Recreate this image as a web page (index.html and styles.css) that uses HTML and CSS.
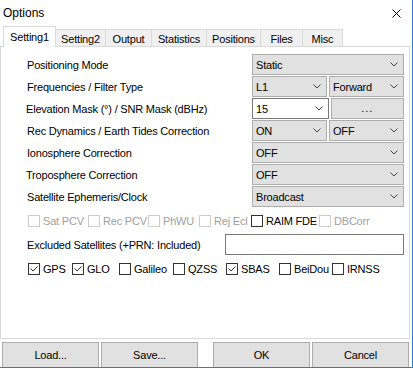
FILE: index.html
```html
<!DOCTYPE html>
<html>
<head>
<meta charset="utf-8">
<link rel="stylesheet" href="styles.css">
</head>
<body>
<div class="window">
  <div class="titlebar">
    <span class="title">Options</span>
    <svg class="close" width="9" height="9" viewBox="0 0 9 9"><path d="M0.5 0.5 L8.5 8.5 M8.5 0.5 L0.5 8.5" stroke="#000" stroke-width="1" fill="none"/></svg>
  </div>
  <div class="tabs">
    <div class="tab active w53">Setting1</div>
    <div class="tab w50">Setting2</div>
    <div class="tab w46">Output</div>
    <div class="tab w55">Statistics</div>
    <div class="tab w54">Positions</div>
    <div class="tab w42">Files</div>
    <div class="tab w40">Misc</div>
  </div>
  <div class="panel">
    <div class="rows">
      <div class="row"><span class="label">Positioning Mode</span>
        <div class="ctl"><div class="combo">Static<svg class="chev" width="8" height="5" viewBox="0 0 8 5"><path d="M0.5 0.5 L4 4 L7.5 0.5" stroke="#444" fill="none"/></svg></div></div></div>
      <div class="row"><span class="label">Frequencies / Filter Type</span>
        <div class="ctl"><div class="combo">L1<svg class="chev" width="8" height="5" viewBox="0 0 8 5"><path d="M0.5 0.5 L4 4 L7.5 0.5" stroke="#444" fill="none"/></svg></div><div class="combo">Forward<svg class="chev" width="8" height="5" viewBox="0 0 8 5"><path d="M0.5 0.5 L4 4 L7.5 0.5" stroke="#444" fill="none"/></svg></div></div></div>
      <div class="row"><span class="label shift">Elevation Mask (°) / SNR Mask (dBHz)</span>
        <div class="ctl"><div class="combo edit">15<svg class="chev" width="8" height="5" viewBox="0 0 8 5"><path d="M0.5 0.5 L4 4 L7.5 0.5" stroke="#444" fill="none"/></svg></div><div class="button dots">...</div></div></div>
      <div class="row"><span class="label">Rec Dynamics / Earth Tides Correction</span>
        <div class="ctl"><div class="combo">ON<svg class="chev" width="8" height="5" viewBox="0 0 8 5"><path d="M0.5 0.5 L4 4 L7.5 0.5" stroke="#444" fill="none"/></svg></div><div class="combo">OFF<svg class="chev" width="8" height="5" viewBox="0 0 8 5"><path d="M0.5 0.5 L4 4 L7.5 0.5" stroke="#444" fill="none"/></svg></div></div></div>
      <div class="row"><span class="label">Ionosphere Correction</span>
        <div class="ctl"><div class="combo">OFF<svg class="chev" width="8" height="5" viewBox="0 0 8 5"><path d="M0.5 0.5 L4 4 L7.5 0.5" stroke="#444" fill="none"/></svg></div></div></div>
      <div class="row"><span class="label shift">Troposphere Correction</span>
        <div class="ctl"><div class="combo">OFF<svg class="chev" width="8" height="5" viewBox="0 0 8 5"><path d="M0.5 0.5 L4 4 L7.5 0.5" stroke="#444" fill="none"/></svg></div></div></div>
      <div class="row"><span class="label">Satellite Ephemeris/Clock</span>
        <div class="ctl"><div class="combo">Broadcast<svg class="chev" width="8" height="5" viewBox="0 0 8 5"><path d="M0.5 0.5 L4 4 L7.5 0.5" stroke="#444" fill="none"/></svg></div></div></div>
    </div>

    <div class="checks first">
      <div class="chk disabled w60"><span class="box"></span>Sat PCV</div>
      <div class="chk disabled w60"><span class="box"></span>Rec PCV</div>
      <div class="chk disabled w51"><span class="box"></span>PhWU</div>
      <div class="chk disabled w52"><span class="box"></span>Rej Ecl</div>
      <div class="chk w68"><span class="box"></span>RAIM FDE</div>
      <div class="chk disabled"><span class="box"></span>DBCorr</div>
    </div>

    <div class="row excl"><span class="label">Excluded Satellites (+PRN: Included)</span><div class="input"></div></div>

    <div class="checks second">
      <div class="chk w44"><span class="box"><svg width="10" height="10" viewBox="0 0 10 10"><path d="M1.5 4.5 L4 7 L8.5 2.5" stroke="#333" fill="none"/></svg></span>GPS</div>
      <div class="chk w47"><span class="box"><svg width="10" height="10" viewBox="0 0 10 10"><path d="M1.5 4.5 L4 7 L8.5 2.5" stroke="#333" fill="none"/></svg></span>GLO</div>
      <div class="chk w54"><span class="box"></span>Galileo</div>
      <div class="chk w53"><span class="box"></span>QZSS</div>
      <div class="chk w53"><span class="box"><svg width="10" height="10" viewBox="0 0 10 10"><path d="M1.5 4.5 L4 7 L8.5 2.5" stroke="#333" fill="none"/></svg></span>SBAS</div>
      <div class="chk w53"><span class="box"></span>BeiDou</div>
      <div class="chk"><span class="box"></span>IRNSS</div>
    </div>
  </div>
  <div class="buttons">
    <div class="button btn">Load...</div>
    <div class="button btn">Save...</div>
    <div class="button btn ok">OK</div>
    <div class="button btn">Cancel</div>
  </div>
</div>
</body>
</html>
```

FILE: styles.css
```css
html, body {
  margin: 0;
  padding: 0;
  background: #fff;
}
body {
  width: 413px;
  height: 368px;
  overflow: hidden;
  font-family: "Liberation Sans", Arial, sans-serif;
  font-size: 11px;
  letter-spacing: -0.2px;
  color: #000;
}
.window {
  width: 412px;
  height: 367px;
  border-right: 1px solid #2a7fd4;
  border-bottom: 1px solid #2a7fd4;
  overflow: hidden;
  display: flex;
  flex-direction: column;
}
.titlebar {
  height: 26px;
  flex: none;
  display: flex;
  align-items: center;
  padding-left: 3px;
}
.title {
  font-size: 12px;
  letter-spacing: 0;
}
.close {
  margin-left: auto;
  margin-right: 11px;
  display: block;
}
.tabs {
  height: 20px;
  flex: none;
  display: flex;
  align-items: flex-end;
  padding-left: 3px;
}
.tab {
  box-sizing: border-box;
  height: 17px;
  background: #f0f0f0;
  border-top: 1px solid #d9d9d9;
  border-right: 1px solid #d9d9d9;
  display: flex;
  align-items: center;
  justify-content: center;
  padding-top: 1px;
}
.tab.active {
  height: 21px;
  margin-bottom: -1px;
  background: #fff;
  border-left: 1px solid #d9d9d9;
  position: relative;
  z-index: 1;
  padding-top: 0;
}
.w40 { width: 40px; }
.w42 { width: 42px; }
.w44 { width: 44px; }
.w46 { width: 46px; }
.w47 { width: 47px; }
.w50 { width: 50px; }
.w51 { width: 51px; }
.w52 { width: 52px; }
.w53 { width: 53px; }
.w54 { width: 54px; }
.w55 { width: 55px; }
.w60 { width: 60px; }
.w68 { width: 68px; }

.panel {
  box-sizing: border-box;
  flex: none;
  width: 410px;
  height: 293px;
  border: 1px solid #d9d9d9;
  padding: 7px 5px 0 26px;
}
.rows {
  display: grid;
  grid-auto-rows: 21px;
  row-gap: 1px;
}
.row {
  display: flex;
  align-items: center;
  justify-content: space-between;
}
.label.shift {
  margin-left: -1px;
}
.ctl {
  width: 152px;
  height: 21px;
  display: flex;
  gap: 2px;
}
.combo, .button {
  box-sizing: border-box;
  flex: 1;
  height: 21px;
  background: #e1e1e1;
  border: 1px solid #adadad;
  display: flex;
  align-items: center;
}
.combo {
  padding-left: 3px;
}
.combo .chev {
  margin-left: auto;
  margin-right: 5px;
  display: block;
}
.combo.edit {
  background: #fff;
  border-color: #7a7a7a;
}
.button {
  justify-content: center;
}
.dots {
  padding-bottom: 2px;
  letter-spacing: 1px;
}

.checks {
  display: flex;
  align-items: center;
  height: 14px;
  padding-left: 1px;
}
.checks.first {
  margin-top: 7px;
}
.checks.second {
  margin-top: 7px;
}
.chk {
  display: flex;
  align-items: center;
  flex: none;
}
.box {
  box-sizing: border-box;
  width: 12px;
  height: 12px;
  border: 1px solid #333;
  background: #fff;
  margin-right: 3px;
  display: flex;
  align-items: center;
  justify-content: center;
}
.box svg {
  display: block;
}
.chk.disabled {
  color: #a0a0a0;
}
.chk.disabled .box {
  border-color: #cccccc;
}
.excl {
  margin-top: 6px;
  height: 21px;
}
.input {
  box-sizing: border-box;
  width: 179px;
  height: 21px;
  border: 1px solid #7a7a7a;
  background: #fff;
}

.buttons {
  flex: none;
  margin-top: 3px;
  height: 25px;
  display: flex;
  gap: 2px;
  padding-left: 2px;
  overflow: hidden;
}
.btn {
  flex: none;
  width: 97px;
  height: 27px;
  padding-bottom: 2px;
}
.btn.ok {
  margin-left: 13px;
}
```
